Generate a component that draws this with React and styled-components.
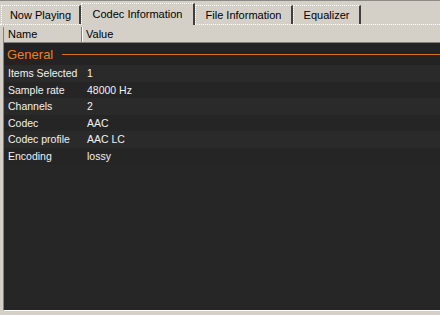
import React from 'react';
import styled, { createGlobalStyle } from 'styled-components';

const Global = createGlobalStyle`
  html, body { margin: 0; padding: 0; }
  body {
    background: #d4d0c8;
    font-family: "Liberation Sans", Arial, sans-serif;
    font-size: 10.5px;
  }
`;

const Window = styled.div`
  width: 440px;
  height: 315px;
  overflow: hidden;
  background: #d4d0c8;
  border-top: 1px solid #8c8a85;
  box-sizing: border-box;
  display: flex;
  flex-direction: column;
`;

const TabBar = styled.div`
  display: flex;
  align-items: flex-end;
  height: 23px;
  padding-left: 1px;
  border-bottom: 1px dotted #ffffff;
  flex-shrink: 0;
`;

const Tab = styled.div`
  box-sizing: border-box;
  width: ${p => p.w}px;
  height: ${p => (p.active ? '22px' : '19px')};
  margin-bottom: ${p => (p.active ? '-1px' : '0')};
  padding-top: ${p => (p.active ? '3px' : '2px')};
  text-align: center;
  background: #d4d0c8;
  color: #000;
  border-top: 1px dotted #ffffff;
  border-left: 1px dotted #ffffff;
  border-right: 2px solid #404040;
  white-space: nowrap;
  font-size: 11px;
  line-height: 15px;
  position: relative;
  z-index: ${p => (p.active ? 1 : 0)};
`;

const Panel = styled.div`
  flex: 1;
  display: flex;
  flex-direction: column;
  padding: 2px 0 4px 3px;
  min-height: 0;
`;

const List = styled.div`
  flex: 1;
  display: flex;
  flex-direction: column;
  background: #262626;
  border-left: 1px solid #808080;
  border-bottom: 1px solid #ffffff;
  min-height: 0;
`;

const Header = styled.div`
  display: grid;
  grid-template-columns: 78px 1fr;
  height: 15px;
  background: #d4d0c8;
  border-bottom: 1px solid #808080;
  flex-shrink: 0;
`;

const HeaderCell = styled.div`
  padding-left: 4px;
  line-height: 15px;
  font-size: 11px;
  color: #000;
  border-right: ${p => (p.last ? 'none' : '1px solid #808080')};
  box-shadow: ${p => (p.last ? 'inset 1px 0 0 #ffffff' : 'none')};
`;

const Group = styled.div`
  display: flex;
  align-items: center;
  height: 22px;
  padding-left: 3px;
  gap: 9px;
  color: #f0801e;
  font-size: 13px;
  background: #232323;
  flex-shrink: 0;
`;

const GroupLine = styled.div`
  flex: 1;
  height: 1px;
  background: #d8701a;
  margin-top: 1px;
`;

const Row = styled.div`
  display: grid;
  grid-template-columns: 83px 1fr;
  height: 16.6px;
  line-height: 16.6px;
  color: #f2f2f2;
  background: ${p => (p.odd ? '#2a2a2a' : '#252525')};
  flex-shrink: 0;
`;

const Cell = styled.div`
  padding-left: ${p => (p.value ? '0' : '4px')};
  white-space: nowrap;
`;

const tabs = [
  ['Now Playing', 80],
  ['Codec Information', 114],
  ['File Information', 98],
  ['Equalizer', 68],
];

const rows = [
  ['Items Selected', '1'],
  ['Sample rate', '48000 Hz'],
  ['Channels', '2'],
  ['Codec', 'AAC'],
  ['Codec profile', 'AAC LC'],
  ['Encoding', 'lossy'],
];

export default function App() {
  return (
    <Window>
      <Global />
      <TabBar>
        {tabs.map(([t, w]) => (
          <Tab key={t} w={w} active={t === 'Codec Information'}>{t}</Tab>
        ))}
      </TabBar>
      <Panel>
        <List>
          <Header>
            <HeaderCell>Name</HeaderCell>
            <HeaderCell last>Value</HeaderCell>
          </Header>
          <Group>
            General
            <GroupLine />
          </Group>
          {rows.map(([k, v], i) => (
            <Row key={k} odd={i % 2 === 0}>
              <Cell>{k}</Cell>
              <Cell value>{v}</Cell>
            </Row>
          ))}
        </List>
      </Panel>
    </Window>
  );
}
